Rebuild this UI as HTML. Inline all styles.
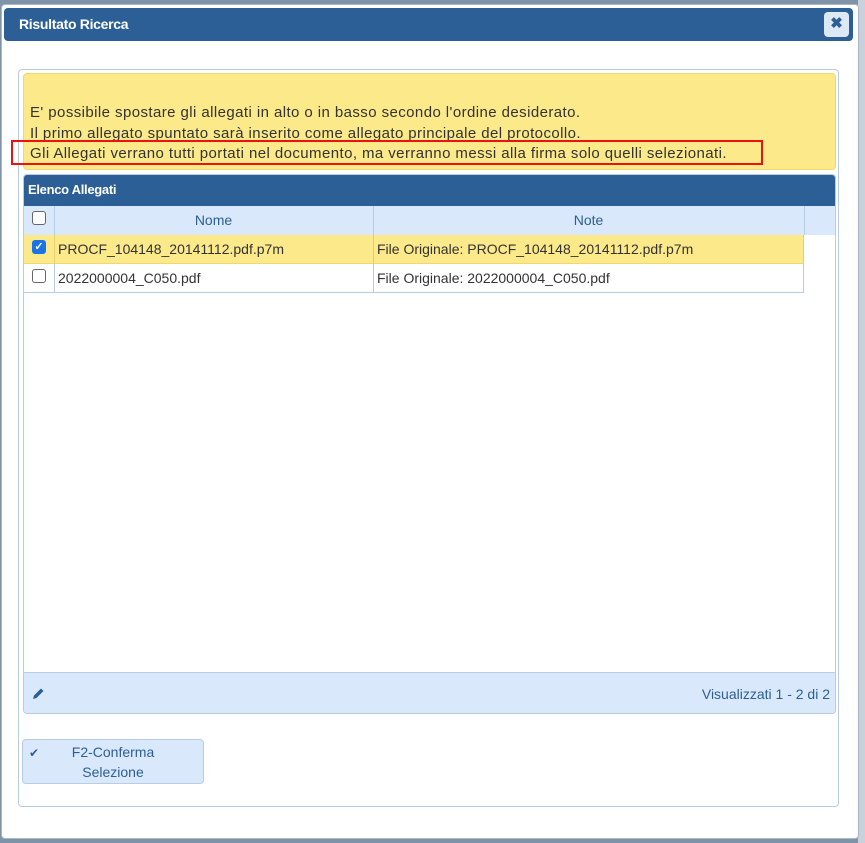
<!DOCTYPE html>
<html><head><meta charset="utf-8"><style>
*{box-sizing:border-box;margin:0;padding:0}
body{width:865px;height:843px;background:#7f93a8;font-family:"Liberation Sans",sans-serif;position:relative;overflow:hidden}
.bgr{position:absolute;left:858px;top:0;width:7px;height:843px;background:#c9d2da}
.dlg{position:absolute;left:1px;top:4px;width:858px;height:835px;background:#fff;border-radius:4px;border:1px solid #a9b8c8}
.hdr{position:absolute;left:4px;top:8px;width:849px;height:33px;background:#2b5f95;border-radius:4px;color:#fff;font-weight:bold;font-size:14px;line-height:33px;padding-left:15px;letter-spacing:-0.3px}
.x{position:absolute;left:824px;top:12px;width:25px;height:25px;background:#dde8f5;border-radius:4px;color:#2b5f95;font-weight:bold;font-size:15px;text-align:center;line-height:24px}
.fs{position:absolute;left:18px;top:69px;width:821px;height:738px;border:1px solid #b7cde3;border-radius:4px}
.yel{position:absolute;left:23px;top:73px;width:813px;height:97px;background:#fbe98a;border:1px solid #f0d870;border-radius:4px;font-size:15px;color:#333;padding:29px 0 0 6px;line-height:20.5px;letter-spacing:0.42px;white-space:nowrap}
.red{position:absolute;left:11px;top:140px;width:752px;height:25px;border:2px solid #e11;}
.grid{position:absolute;left:23px;top:174px;width:813px;height:540px;border:1px solid #b7cde3;border-radius:4px;overflow:hidden;background:#fff}
.gh{height:31px;background:#2b5f95;color:#fff;font-weight:bold;font-size:13px;line-height:30px;padding-left:4px;letter-spacing:-0.3px}
.ch{position:absolute;top:31px;left:0;width:811px;height:29px;background:#dae8fb}
.c{position:absolute;font-size:14px;line-height:28px;color:#333}
.row{position:absolute;left:0;width:780px;height:29px}
.cb{position:absolute;width:14px;height:14px;border:1px solid #666;border-radius:3px;background:#fff}
.foot{position:absolute;left:0;top:497px;width:811px;height:42px;background:#dae8fb;border-top:1px solid #b7cde3;color:#2b5f95;font-size:14px;line-height:42px}
.btn{position:absolute;left:22px;top:739px;width:182px;height:45px;background:#dae8fb;border:1px solid #b7cde3;border-radius:4px;color:#2b5f95;font-size:14px;text-align:center;line-height:20px;padding-top:2px}
</style></head><body>
<div class="bgr"></div>
<div class="dlg"></div>
<div class="hdr">Risultato Ricerca</div>
<div class="x">✖</div>
<div class="fs"></div>
<div class="yel">E' possibile spostare gli allegati in alto o in basso secondo l'ordine desiderato.<br>Il primo allegato spuntato sarà inserito come allegato principale del protocollo.<br>Gli Allegati verrano tutti portati nel documento, ma verranno messi alla firma solo quelli selezionati.</div>
<div class="red"></div>
<div class="grid">
<div class="gh">Elenco Allegati</div>
<div class="ch">
<div class="cb" style="left:8px;top:5px"></div>
<div style="position:absolute;left:30px;top:0;width:1px;height:29px;background:#b7cde3"></div>
<div style="position:absolute;left:349px;top:0;width:1px;height:29px;background:#b7cde3"></div>
<div style="position:absolute;left:780px;top:0;width:1px;height:29px;background:#b7cde3"></div>
<div class="c" style="left:30px;width:319px;text-align:center;color:#2b5f95">Nome</div>
<div class="c" style="left:349px;width:431px;text-align:center;color:#2b5f95">Note</div>
</div>
<div class="row" style="top:60px;background:#fbe98a;border-bottom:1px solid #f0d870;border-right:1px solid #b7cde3">
<div class="cb" style="left:8px;top:5px;background:#1a73e8;border-color:#1a73e8;color:#fff;font-size:11px;line-height:12px;text-align:center;font-weight:bold">✓</div>
<div style="position:absolute;left:30px;top:0;width:1px;height:29px;background:#e6d070"></div>
<div style="position:absolute;left:349px;top:0;width:1px;height:29px;background:#b7cde3"></div>
<div class="c" style="left:34px">PROCF_104148_20141112.pdf.p7m</div>
<div class="c" style="left:353px">File Originale: PROCF_104148_20141112.pdf.p7m</div>
</div>
<div class="row" style="top:89px;border-bottom:1px solid #b7cde3;border-right:1px solid #b7cde3;height:29px">
<div class="cb" style="left:8px;top:5px"></div>
<div style="position:absolute;left:30px;top:0;width:1px;height:29px;background:#b7cde3"></div>
<div style="position:absolute;left:349px;top:0;width:1px;height:29px;background:#b7cde3"></div>
<div class="c" style="left:34px">2022000004_C050.pdf</div>
<div class="c" style="left:353px">File Originale: 2022000004_C050.pdf</div>
</div>
<div class="foot"><svg style="position:absolute;left:7px;top:14px" width="14" height="14" viewBox="0 0 14 14"><path d="M2 12 L3 8.5 L10 1.5 L12.5 4 L5.5 11 Z" fill="#2b5f95"/></svg><span style="position:absolute;right:5px">Visualizzati 1 - 2 di 2</span></div>
</div>
<div class="btn"><span style="position:absolute;left:6px;top:3px;font-size:12px">✔</span>F2-Conferma<br>Selezione</div>
</body></html>
